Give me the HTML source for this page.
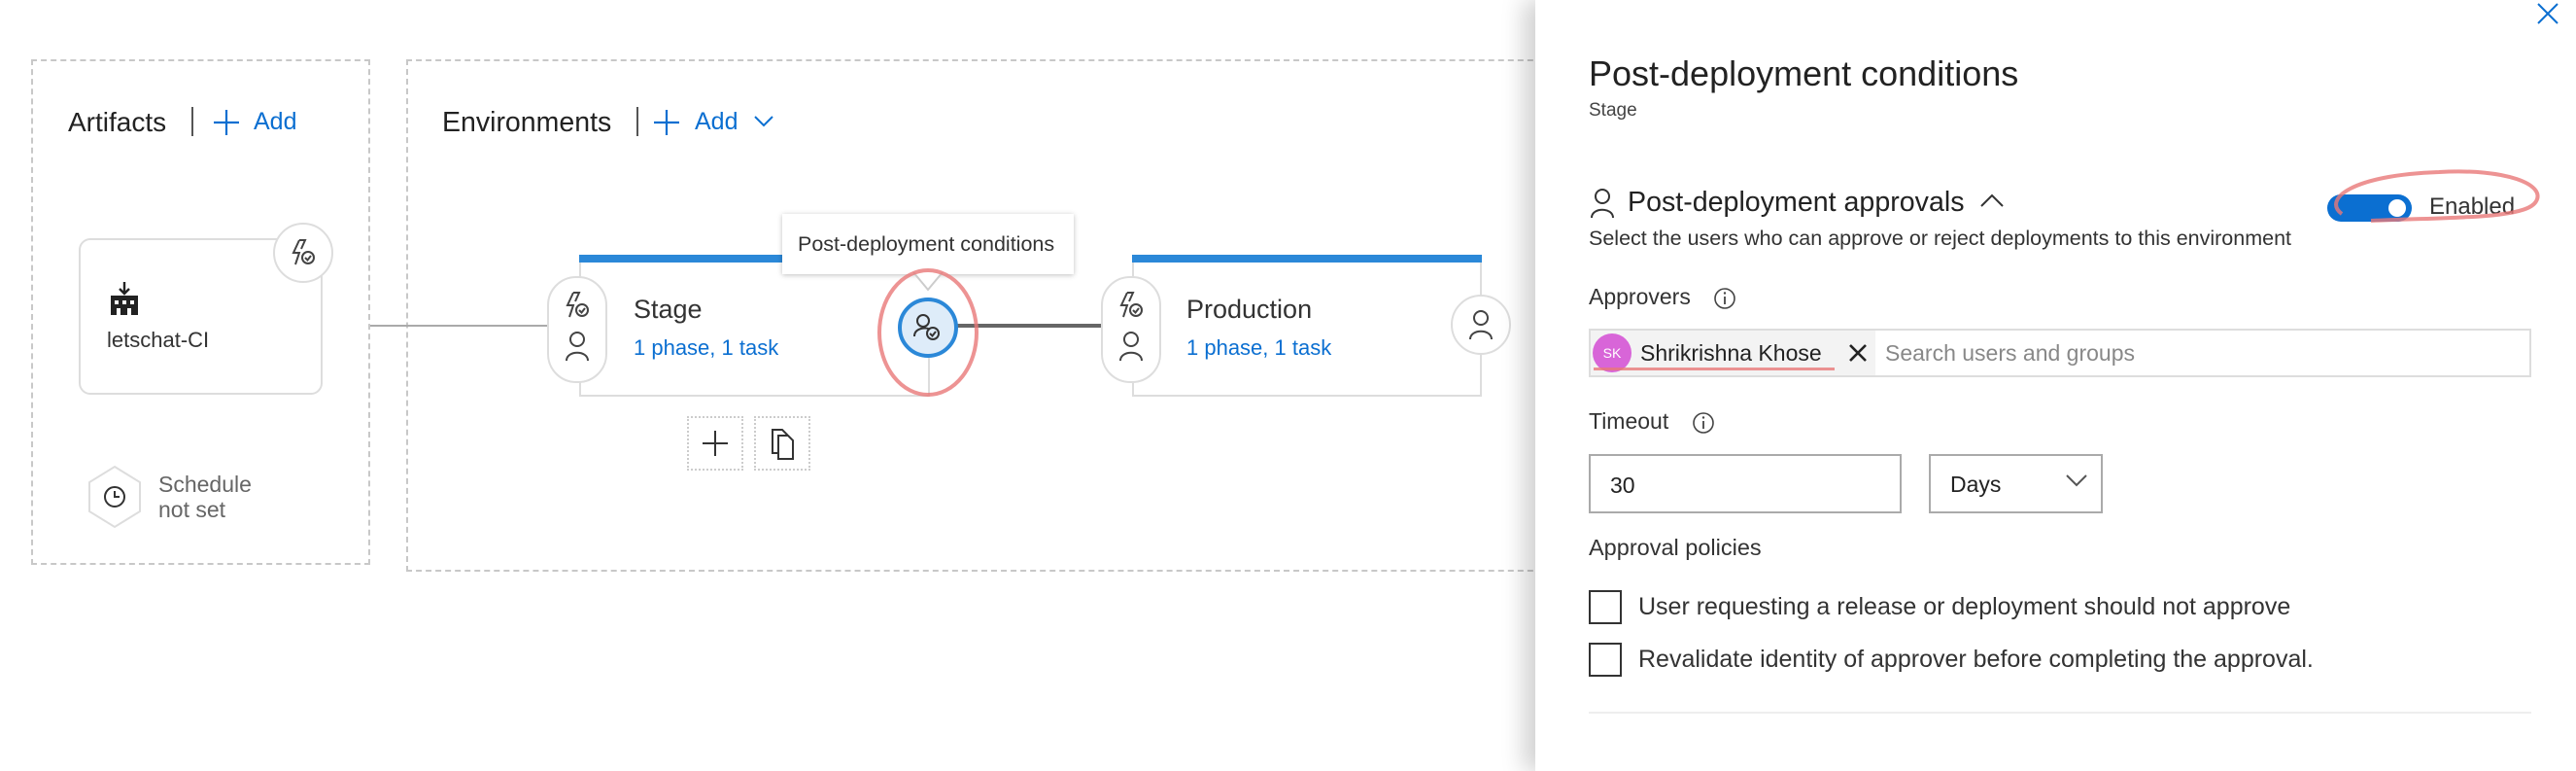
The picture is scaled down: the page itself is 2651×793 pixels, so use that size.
<!DOCTYPE html>
<html><head><meta charset="utf-8"><style>
*{box-sizing:border-box;margin:0;padding:0}
body{width:2651px;height:793px;overflow:hidden;background:#fff;font-family:"Liberation Sans",sans-serif;color:#333;position:relative}
.a{position:absolute}
.dash{border:2px dashed #c8c8c8}
.blue{color:#0b6fd1}
.pill{background:#fff;border:2px solid #ddd;border-radius:30px}
.circ{background:#fff;border:2px solid #ddd;border-radius:50%}
</style></head><body>

<div class="a dash" style="left:32px;top:61px;width:349px;height:520px"></div>
<div class="a dash" style="left:418px;top:61px;width:1200px;height:527px"></div>

<div class="a" style="left:70px;top:110px;font-size:28px;color:#222">Artifacts</div>
<div class="a" style="left:197px;top:110px;width:2px;height:30px;background:#555"></div>
<svg class="a" style="left:218px;top:111px" width="30" height="30"><path d="M15 2 V28 M2 15 H28" stroke="#0b6fd1" stroke-width="2.2"/></svg>
<div class="a blue" style="left:261px;top:111px;font-size:25px">Add</div>

<div class="a" style="left:455px;top:110px;font-size:28.5px;color:#222">Environments</div>
<div class="a" style="left:655px;top:110px;width:2px;height:30px;background:#555"></div>
<svg class="a" style="left:671px;top:111px" width="30" height="30"><path d="M15 2 V28 M2 15 H28" stroke="#0b6fd1" stroke-width="2.2"/></svg>
<div class="a blue" style="left:715px;top:111px;font-size:25px">Add</div>
<svg class="a" style="left:775px;top:118px" width="22" height="14"><path d="M2 2 L11 11 L20 2" stroke="#0b6fd1" stroke-width="2" fill="none"/></svg>

<!-- artifact card -->
<div class="a" style="left:81px;top:245px;width:251px;height:161px;border:2px solid #ddd;border-radius:12px"></div>
<div class="a circ" style="left:281px;top:229px;width:62px;height:62px"></div>
<svg class="a" style="left:296px;top:244px" width="32" height="32"><path d="M12 3 L6 16 L12 16 L8 28 M12 3 L18 3 L14 12" stroke="#444" stroke-width="2" fill="none"/><circle cx="21" cy="21" r="6" stroke="#444" stroke-width="2" fill="#fff"/><path d="M18 21 L20.5 23.5 L24 19" stroke="#444" stroke-width="2" fill="none"/></svg>
<svg class="a" style="left:111px;top:290px" width="34" height="36"><path d="M17 0 V12 M12 7 L17 12 L22 7" stroke="#222" stroke-width="2.4" fill="none"/><rect x="3" y="14" width="28" height="20" fill="#222"/><rect x="7" y="19" width="4" height="4" fill="#fff"/><rect x="15" y="19" width="4" height="4" fill="#fff"/><rect x="23" y="19" width="4" height="4" fill="#fff"/><rect x="9" y="27" width="4" height="7" fill="#fff"/><rect x="20" y="27" width="4" height="7" fill="#fff"/></svg>
<div class="a" style="left:110px;top:337px;font-size:22px;color:#333">letschat-CI</div>

<svg class="a" style="left:88px;top:478px" width="60" height="66"><polygon points="30,2 56,18 56,48 30,64 4,48 4,18" fill="#fff" stroke="#ddd" stroke-width="2"/><circle cx="30" cy="33" r="10" stroke="#333" stroke-width="2" fill="none"/><path d="M30 27 V33 H35" stroke="#333" stroke-width="2" fill="none"/></svg>
<div class="a" style="left:163px;top:485px;font-size:23px;color:#666;line-height:26px">Schedule<br>not set</div>

<!-- connectors -->
<div class="a" style="left:381px;top:334px;width:190px;height:2px;background:#aaa"></div>
<div class="a" style="left:984px;top:333px;width:152px;height:4px;background:#666"></div>

<!-- stage card -->
<div class="a" style="left:596px;top:263px;width:359px;height:145px;border-left:2px solid #ddd;border-bottom:2px solid #ddd"></div>
<div class="a" style="left:596px;top:262px;width:359px;height:8px;background:#2b88d8"></div>
<div class="a" style="left:955px;top:360px;width:2px;height:48px;background:#ddd"></div>
<div class="a pill" style="left:563px;top:284px;width:62px;height:110px"></div>
<svg class="a" style="left:578px;top:298px" width="32" height="32"><path d="M12 3 L6 16 L12 16 L8 28 M12 3 L18 3 L14 12" stroke="#444" stroke-width="2" fill="none"/><circle cx="21" cy="21" r="6" stroke="#444" stroke-width="2" fill="#fff"/><path d="M18 21 L20.5 23.5 L24 19" stroke="#444" stroke-width="2" fill="none"/></svg>
<svg class="a" style="left:580px;top:340px" width="28" height="32"><circle cx="14" cy="9" r="7" stroke="#444" stroke-width="2" fill="none"/><path d="M3 31 C3 20 25 20 25 31" stroke="#444" stroke-width="2" fill="none"/></svg>
<div class="a" style="left:652px;top:303px;font-size:27px;color:#333">Stage</div>
<div class="a blue" style="left:652px;top:345px;font-size:22px">1 phase, 1 task</div>

<div class="a" style="left:924px;top:306px;width:62px;height:62px;border-radius:50%;background:#deecf9;border:4px solid #2b88d8"></div>
<svg class="a" style="left:938px;top:320px" width="34" height="34"><circle cx="12" cy="10" r="6" stroke="#333" stroke-width="2" fill="none"/><path d="M3 26 C3 17 16 16 19 19" stroke="#333" stroke-width="2" fill="none"/><circle cx="22" cy="23" r="6" stroke="#333" stroke-width="2" fill="none"/><path d="M19 23 L21.5 25.5 L25 21" stroke="#333" stroke-width="2" fill="none"/></svg>

<!-- tooltip -->
<div class="a" style="left:805px;top:220px;width:300px;height:62px;background:#fff;box-shadow:0 1px 5px rgba(0,0,0,.25);font-size:21.5px;color:#333;padding:19px 0 0 16px;white-space:nowrap">Post-deployment conditions</div>
<svg class="a" style="left:938px;top:280px" width="34" height="20"><path d="M2 0 L17 18 L32 0" stroke="#ccc" stroke-width="2" fill="#fff"/></svg>

<!-- red circle -->
<svg class="a" style="left:880px;top:270px" width="150" height="150"><ellipse cx="75" cy="72" rx="50" ry="64" stroke="#e87878" stroke-width="4" fill="none" opacity=".8"/></svg>

<!-- buttons -->
<div class="a" style="left:707px;top:428px;width:58px;height:56px;border:2px dotted #ccc"></div>
<div class="a" style="left:776px;top:428px;width:58px;height:56px;border:2px dotted #ccc"></div>
<svg class="a" style="left:721px;top:441px" width="30" height="30"><path d="M15 2 V28 M2 15 H28" stroke="#333" stroke-width="2"/></svg>
<svg class="a" style="left:792px;top:440px" width="28" height="34"><path d="M3 2 H13 L18 7 V26 H3 Z" stroke="#333" stroke-width="2" fill="#fff"/><path d="M9 8 H19 L24 13 V32 H9 Z" stroke="#333" stroke-width="2" fill="#fff"/></svg>

<!-- production -->
<div class="a" style="left:1165px;top:263px;width:360px;height:145px;border-left:2px solid #ddd;border-bottom:2px solid #ddd;border-right:2px solid #ddd"></div>
<div class="a" style="left:1165px;top:262px;width:360px;height:8px;background:#2b88d8"></div>
<div class="a pill" style="left:1133px;top:284px;width:62px;height:110px"></div>
<svg class="a" style="left:1148px;top:298px" width="32" height="32"><path d="M12 3 L6 16 L12 16 L8 28 M12 3 L18 3 L14 12" stroke="#444" stroke-width="2" fill="none"/><circle cx="21" cy="21" r="6" stroke="#444" stroke-width="2" fill="#fff"/><path d="M18 21 L20.5 23.5 L24 19" stroke="#444" stroke-width="2" fill="none"/></svg>
<svg class="a" style="left:1150px;top:340px" width="28" height="32"><circle cx="14" cy="9" r="7" stroke="#444" stroke-width="2" fill="none"/><path d="M3 31 C3 20 25 20 25 31" stroke="#444" stroke-width="2" fill="none"/></svg>
<div class="a" style="left:1221px;top:303px;font-size:27px;color:#333">Production</div>
<div class="a blue" style="left:1221px;top:345px;font-size:22px">1 phase, 1 task</div>
<div class="a circ" style="left:1493px;top:303px;width:62px;height:62px"></div>
<svg class="a" style="left:1510px;top:318px" width="28" height="32"><circle cx="14" cy="9" r="7" stroke="#444" stroke-width="2" fill="none"/><path d="M3 31 C3 20 25 20 25 31" stroke="#444" stroke-width="2" fill="none"/></svg>

<!-- panel -->
<div class="a" style="left:1580px;top:0;width:1071px;height:793px;background:#fff;box-shadow:-12px 0 22px rgba(0,0,0,.18)"></div>
<svg class="a" style="left:2610px;top:2px" width="24" height="24"><path d="M2 2 L22 22 M22 2 L2 22" stroke="#0b6fd1" stroke-width="2"/></svg>
<div class="a" style="left:1635px;top:55px;font-size:36px;color:#222;white-space:nowrap">Post-deployment conditions</div>
<div class="a" style="left:1635px;top:103px;font-size:19px;color:#444">Stage</div>

<svg class="a" style="left:1635px;top:193px" width="28" height="32"><circle cx="14" cy="9" r="7" stroke="#333" stroke-width="2" fill="none"/><path d="M3 31 C3 20 25 20 25 31" stroke="#333" stroke-width="2" fill="none"/></svg>
<div class="a" style="left:1675px;top:192px;font-size:28.6px;color:#222;white-space:nowrap">Post-deployment approvals</div>
<svg class="a" style="left:2037px;top:198px" width="26" height="16"><path d="M2 14 L13 3 L24 14" stroke="#333" stroke-width="2" fill="none"/></svg>
<div class="a" style="left:1635px;top:233px;font-size:21.5px;color:#333;white-space:nowrap">Select the users who can approve or reject deployments to this environment</div>

<div class="a" style="left:2395px;top:200px;width:87px;height:28px;border-radius:14px;background:#0b6fd1"></div>
<div class="a" style="left:2458px;top:205px;width:18px;height:18px;border-radius:50%;background:#fff"></div>
<div class="a" style="left:2500px;top:199px;font-size:24px;color:#333">Enabled</div>
<svg class="a" style="left:2380px;top:165px" width="240" height="90"><path d="M30 55 C10 40 40 15 130 12 C200 8 240 25 230 42 C220 60 150 58 60 62" stroke="#e87878" stroke-width="4" fill="none" opacity=".8"/></svg>

<div class="a" style="left:1635px;top:292px;font-size:23px;color:#333">Approvers</div>
<svg class="a" style="left:1763px;top:295px" width="24" height="24"><circle cx="12" cy="12" r="10" stroke="#444" stroke-width="1.6" fill="none"/><path d="M12 10 V18" stroke="#444" stroke-width="1.8"/><circle cx="12" cy="6.5" r="1.2" fill="#444"/></svg>
<div class="a" style="left:1635px;top:338px;width:970px;height:50px;border:2px solid #ddd"></div>
<div class="a" style="left:1637px;top:340px;width:293px;height:46px;background:#f3f3f3"></div>
<div class="a" style="left:1639px;top:343px;width:40px;height:40px;border-radius:50%;background:#d865d8;color:#fff;font-size:14px;text-align:center;line-height:40px">SK</div>
<div class="a" style="left:1688px;top:350px;font-size:23px;color:#222">Shrikrishna Khose</div>
<div class="a" style="left:1640px;top:378px;width:248px;height:3px;background:#e87878;opacity:.8"></div>
<svg class="a" style="left:1902px;top:353px" width="20" height="20"><path d="M2 2 L18 18 M18 2 L2 18" stroke="#222" stroke-width="2.6"/></svg>
<div class="a" style="left:1940px;top:350px;font-size:23px;color:#888">Search users and groups</div>

<div class="a" style="left:1635px;top:420px;font-size:23px;color:#333">Timeout</div>
<svg class="a" style="left:1741px;top:423px" width="24" height="24"><circle cx="12" cy="12" r="10" stroke="#444" stroke-width="1.6" fill="none"/><path d="M12 10 V18" stroke="#444" stroke-width="1.8"/><circle cx="12" cy="6.5" r="1.2" fill="#444"/></svg>
<div class="a" style="left:1635px;top:467px;width:322px;height:61px;border:2px solid #aaa;font-size:23px;padding:17px 0 0 20px;color:#222">30</div>
<div class="a" style="left:1985px;top:467px;width:179px;height:61px;border:2px solid #aaa;font-size:23px;padding:16px 0 0 20px;color:#222">Days</div>
<svg class="a" style="left:2125px;top:487px" width="24" height="16"><path d="M2 2 L12 12 L22 2" stroke="#555" stroke-width="2" fill="none"/></svg>

<div class="a" style="left:1635px;top:550px;font-size:23.5px;color:#333">Approval policies</div>
<div class="a" style="left:1635px;top:607px;width:34px;height:35px;border:2px solid #333"></div>
<div class="a" style="left:1686px;top:610px;font-size:25px;color:#333;white-space:nowrap">User requesting a release or deployment should not approve</div>
<div class="a" style="left:1635px;top:661px;width:34px;height:35px;border:2px solid #333"></div>
<div class="a" style="left:1686px;top:664px;font-size:25px;color:#333;white-space:nowrap">Revalidate identity of approver before completing the approval.</div>
<div class="a" style="left:1635px;top:732px;width:970px;height:2px;background:#eee"></div>
</body></html>
